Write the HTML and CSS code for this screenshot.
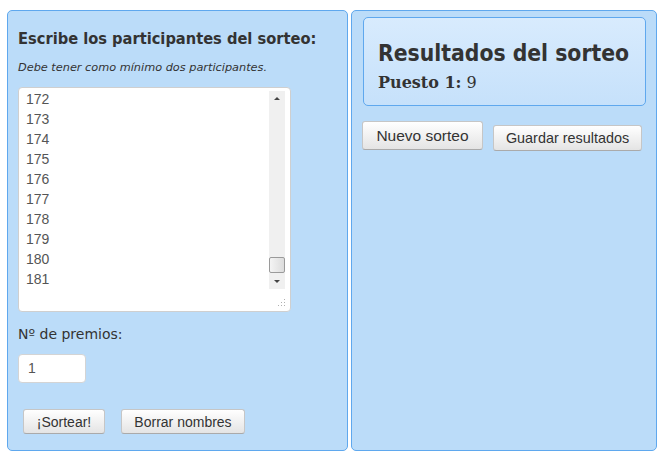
FILE: index.html
```html
<!DOCTYPE html>
<html lang="es">
<head>
<meta charset="utf-8">
<title>Sorteo</title>
<link rel="stylesheet" href="styles.css">
</head>
<body>
<div class="page">
  <section class="panel left">
    <h2 class="title">Escribe los participantes del sorteo:</h2>
    <p class="hint">Debe tener como mínimo dos participantes.</p>
    <div class="textarea">
      <div class="lines">
        <div>172</div><div>173</div><div>174</div><div>175</div><div>176</div>
        <div>177</div><div>178</div><div>179</div><div>180</div><div>181</div>
      </div>
      <div class="scrollbar">
        <div class="arrow up"></div>
        <div class="track"><div class="thumb"></div></div>
        <div class="arrow down"></div>
      </div>
      <svg class="grip" width="8" height="8" viewBox="0 0 8 8">
        <rect x="6" y="0" width="1" height="1" fill="#b0b0b0"/>
        <rect x="3" y="3" width="1" height="1" fill="#b0b0b0"/>
        <rect x="6" y="3" width="1" height="1" fill="#b0b0b0"/>
        <rect x="0" y="6" width="1" height="1" fill="#b0b0b0"/>
        <rect x="3" y="6" width="1" height="1" fill="#b0b0b0"/>
        <rect x="6" y="6" width="1" height="1" fill="#b0b0b0"/>
      </svg>
    </div>
    <label class="label">Nº de premios:</label>
    <div class="num">1</div>
    <div class="actions">
      <button class="btn b-sortear">¡Sortear!</button>
      <button class="btn b-borrar">Borrar nombres</button>
    </div>
  </section>
  <section class="panel right">
    <div class="result">
      <h1 class="rtitle">Resultados del sorteo</h1>
      <p class="puesto"><b>Puesto 1:</b> 9</p>
    </div>
    <div class="ractions">
      <button class="btn b-nuevo">Nuevo sorteo</button>
      <button class="btn b-guardar">Guardar resultados</button>
    </div>
  </section>
</div>
</body>
</html>
```
FILE: styles.css
```css
html, body { margin: 0; padding: 0; background: #fff; }
body { font-family: "DejaVu Sans", sans-serif; color: #333; }
.page {
  display: flex;
  gap: 3px;
  padding: 10px 0 0 7px;
}
.panel {
  background: #bbdcf9;
  border: 1px solid #5fa8ee;
  border-radius: 5px;
  height: 439px;
  box-sizing: content-box;
}
.left { width: 339px; padding: 0; }
.right { width: 304px; }
.title {
  margin: 18px 0 0 10px;
  font-family: "DejaVu Sans Condensed", "DejaVu Sans", sans-serif;
  font-stretch: condensed;
  font-weight: bold;
  font-size: 16.3px;
  line-height: 20px;
  color: #333;
}
.hint {
  margin: 12px 0 0 10px;
  font-size: 11.3px;
  font-style: italic;
  line-height: 14px;
  color: #333;
}
.textarea {
  position: relative;
  margin: 12px 0 0 10px;
  width: 271px;
  height: 223px;
  background: #fff;
  border: 1px solid #cfcfcf;
  border-radius: 4px;
}
.lines {
  padding: 1px 0 0 7px;
  font-family: "Liberation Sans", Arial, sans-serif;
  font-size: 14px;
  line-height: 20px;
  color: #555;
}
.scrollbar {
  position: absolute;
  left: 250px;
  top: 3px;
  width: 16px;
  height: 198px;
  background: #f0f0f0;
  display: flex;
  flex-direction: column;
}
.arrow { height: 16px; position: relative; }
.arrow.up::after, .arrow.down::after {
  content: "";
  position: absolute;
  left: 5px;
  border-left: 3px solid transparent;
  border-right: 3px solid transparent;
}
.arrow.up::after { top: 6px; border-bottom: 3px solid #444; }
.arrow.down::after { top: 7px; border-top: 3px solid #444; }
.track { flex: 1; position: relative; }
.thumb {
  position: absolute;
  left: 0;
  bottom: 0;
  width: 14px;
  height: 14px;
  border: 1px solid #9a9a9a;
  border-radius: 2px;
  background: linear-gradient(to right, #f4f4f4, #dcdcdc);
}
.grip { position: absolute; right: 4px; bottom: 4px; }
.label {
  display: block;
  margin: 14px 0 0 10px;
  font-size: 14px;
  line-height: 16px;
  color: #333;
}
.num {
  margin: 12px 0 0 10px;
  width: 57px;
  height: 27px;
  padding-left: 9px;
  box-sizing: content-box;
  background: #fff;
  border: 1px solid #d4d4d4;
  border-radius: 4px;
  font-family: "Liberation Sans", Arial, sans-serif;
  font-size: 14px;
  line-height: 27px;
  color: #555;
}
.actions {
  display: flex;
  gap: 16px;
  margin: 26px 0 0 15px;
}
.btn {
  font-family: "Liberation Sans", Arial, sans-serif;
  font-size: 14px;
  color: #333;
  background: linear-gradient(#ffffff, #e4e4e4);
  border: 1px solid #c6c6c6;
  border-bottom-color: #aaa;
  border-radius: 3px;
  padding: 0;
  margin: 0;
}
.b-sortear { width: 82px; height: 25px; }
.b-borrar { width: 124px; height: 25px; }
.result {
  margin: 6px 0 0 11px;
  width: 281px;
  height: 87px;
  border: 1px solid #5fa8ee;
  border-radius: 5px;
  background: linear-gradient(#d8ebfd, #c6e1fb);
}
.rtitle {
  margin: 21px 0 0 14px;
  font-family: "DejaVu Sans Condensed", "DejaVu Sans", sans-serif;
  font-stretch: condensed;
  font-weight: bold;
  font-size: 22.7px;
  line-height: 28px;
  color: #333;
}
.puesto {
  margin: 6px 0 0 14px;
  font-family: "DejaVu Serif", serif;
  font-size: 16px;
  line-height: 20px;
  color: #333;
}
.puesto b { font-weight: bold; }
.ractions {
  display: flex;
  align-items: flex-start;
  gap: 10px;
  margin: 15px 0 0 10px;
}
.b-nuevo { width: 121px; height: 29px; font-size: 15.5px; }
.b-guardar { width: 149px; height: 26px; margin-top: 4px; font-size: 14.4px; }
```
